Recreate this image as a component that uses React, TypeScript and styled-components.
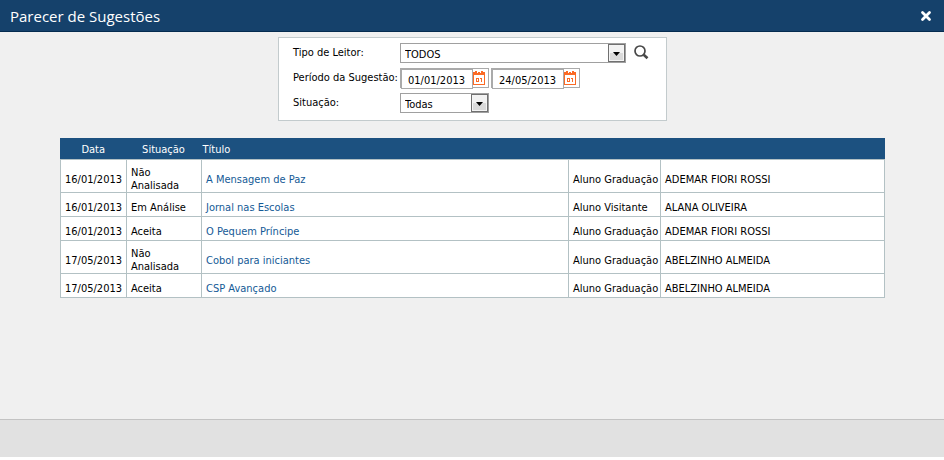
import React from "react";
import styled, { createGlobalStyle } from "styled-components";

const ui = `"DejaVu Sans Condensed", "DejaVu Sans", sans-serif`;

const GlobalStyle = createGlobalStyle`
  * { box-sizing: border-box; }
  body { margin: 0; background: #fff; color: #000; font: 11px/13px ${ui}; }
`;

const Dialog = styled.div`
  display: flex;
  flex-direction: column;
  min-height: calc(100vh - 3px);
  background: #f0f0f0;
`;

const TitleBar = styled.header`
  display: flex;
  align-items: center;
  justify-content: space-between;
  height: 32px;
  padding: 0 12px 0 10px;
  background: #15416b;
  border-bottom: 1px solid #052b4f;
`;

const Title = styled.h1`
  margin: 0;
  color: #fff;
  font: 400 15px/20px "Open Sans", "Noto Sans", sans-serif;
`;

const IconButton = styled.button`
  display: flex;
  padding: 0;
  border: 0;
  background: none;
  cursor: pointer;
`;

const Body = styled.main`
  flex: 1;
  padding: 5px 59px 24px 60px;
`;

const Filters = styled.form`
  display: grid;
  grid-template-columns: 107px auto;
  row-gap: 5px;
  width: fit-content;
  margin: 0 auto 17px;
  padding: 5px 17px 7px 14px;
  border: 1px solid #c3cbcd;
  background: #fff;
`;

const Label = styled.label`
  padding-top: 3px;
  white-space: nowrap;
`;

const Controls = styled.div`
  display: flex;
  gap: 2px;
`;

const SelectBox = styled.div<{ $width: number }>`
  position: relative;
  display: flex;
  width: ${(p) => p.$width}px;
  height: 20px;
`;

const Select = styled.select`
  appearance: none;
  width: 100%;
  padding: 2px 20px 0 4px;
  border: 1px solid #a0a0a0;
  border-radius: 0;
  background: #fff;
  color: #000;
  font: 11px/15px ${ui};
`;

const Arrow = styled.span`
  position: absolute;
  top: 1px;
  right: 1px;
  bottom: 1px;
  display: flex;
  align-items: center;
  justify-content: center;
  width: 17px;
  padding-top: 1px;
  border: 1px solid #707070;
  background: linear-gradient(#f2f2f2 50%, #dadada 50%);
  box-shadow: inset 0 0 0 1px #f4f4f4;
  pointer-events: none;
`;

const SearchButton = styled(IconButton)`
  margin: 2px 0 0 6px;
`;

const DateBox = styled.div`
  display: flex;
  width: 89px;
  height: 20px;
  border: 1px solid #aaa;
`;

const DateInput = styled.input`
  width: 72px;
  height: 20px;
  padding: 2px 0 0 6px;
  border: 1px solid #aaa;
  border-radius: 0;
  background: #fff;
  color: #000;
  font: 11px/15px ${ui};
`;

const Table = styled.table`
  width: 100%;
  table-layout: fixed;
  border-collapse: collapse;
  background: #fff;
`;

const Col = styled.col<{ $width?: number }>`
  width: ${(p) => (p.$width ? `${p.$width}px` : "auto")};
`;

const HeadRow = styled.tr`
  border: solid #1c5180;
  border-width: 0 1px;
  background: #1c5180;
`;

const HeadCell = styled.th<{ $start?: boolean }>`
  height: 21px;
  padding: 2px 2px 0 1px;
  color: #fff;
  font-weight: 400;
  text-align: ${(p) => (p.$start ? "left" : "center")};
`;

const Cell = styled.td<{ $center?: boolean }>`
  height: 24px;
  padding: 7px 0 0 ${(p) => (p.$center ? 0 : 4)}px;
  border: 1px solid #b3c1c4;
  text-align: ${(p) => (p.$center ? "center" : "left")};
  white-space: nowrap;
  vertical-align: middle;
`;

const StatusCell = styled(Cell)`
  padding: 6px 8px 0 4px;
  white-space: normal;
`;

const TitleLink = styled.a`
  color: #145a96;
  text-decoration: none;
`;

const Footer = styled.footer`
  height: 38px;
  border-top: 1px solid #c3c3c3;
  background: #e1e1e1;
`;

const CloseIcon = () => (
  <svg width="12" height="12" viewBox="0 0 12 12" aria-hidden="true">
    <path d="M2.5 2.5l7 7M9.5 2.5l-7 7" stroke="#fff" strokeWidth="2.8" strokeLinecap="round" />
  </svg>
);

const SearchIcon = () => (
  <svg width="15" height="15" viewBox="0 0 15 15" fill="none" stroke="#484848" aria-hidden="true">
    <circle cx="6" cy="6" r="5" strokeWidth="1.7" />
    <path d="M9.7 9.7l3.8 3.6" strokeWidth="2.6" />
  </svg>
);

const CalendarIcon = () => (
  <svg width="13" height="17" viewBox="0 0 13 17" fill="none" stroke="#fb6a25" shapeRendering="crispEdges" aria-hidden="true">
    <path d="M0.5 4.5h11v11h-11z" />
    <path d="M0 4h12v2h-12zM2 2h2v2h-2zM8 2h2v2h-2zM0 3h2v1h-2zM5 3h2v1h-2zM10 3h2v1h-2z" fill="#fb6a25" stroke="none" />
    <path d="M3.5 9.5h2v3h-2zM7 9.5h1.5V13" />
  </svg>
);

const Caret = () => (
  <svg width="7" height="4" viewBox="0 0 7 4" aria-hidden="true">
    <path d="M0 0h7L3.5 4z" fill="#000" />
  </svg>
);

const rows = [
  ["16/01/2013", "Não Analisada", "A Mensagem de Paz", "Aluno Graduação", "ADEMAR FIORI ROSSI"],
  ["16/01/2013", "Em Análise", "Jornal nas Escolas", "Aluno Visitante", "ALANA OLIVEIRA"],
  ["16/01/2013", "Aceita", "O Pequem Príncipe", "Aluno Graduação", "ADEMAR FIORI ROSSI"],
  ["17/05/2013", "Não Analisada", "Cobol para iniciantes", "Aluno Graduação", "ABELZINHO ALMEIDA"],
  ["17/05/2013", "Aceita", "CSP Avançado", "Aluno Graduação", "ABELZINHO ALMEIDA"],
];

export default function App() {
  return (
    <>
      <GlobalStyle />
      <Dialog>
        <TitleBar>
          <Title>Parecer de Sugestões</Title>
          <IconButton type="button" aria-label="Fechar"><CloseIcon /></IconButton>
        </TitleBar>
        <Body>
          <Filters>
            <Label htmlFor="leitor">Tipo de Leitor:</Label>
            <Controls>
              <SelectBox $width={226}>
                <Select id="leitor"><option>TODOS</option></Select>
                <Arrow><Caret /></Arrow>
              </SelectBox>
              <SearchButton type="button" aria-label="Pesquisar"><SearchIcon /></SearchButton>
            </Controls>
            <Label htmlFor="inicio">Período da Sugestão:</Label>
            <Controls>
              <DateBox>
                <DateInput id="inicio" defaultValue="01/01/2013" />
                <IconButton type="button" aria-label="Escolher data inicial"><CalendarIcon /></IconButton>
              </DateBox>
              <DateBox>
                <DateInput aria-label="Data final" defaultValue="24/05/2013" />
                <IconButton type="button" aria-label="Escolher data final"><CalendarIcon /></IconButton>
              </DateBox>
            </Controls>
            <Label htmlFor="situacao">Situação:</Label>
            <Controls>
              <SelectBox $width={89}>
                <Select id="situacao"><option>Todas</option></Select>
                <Arrow><Caret /></Arrow>
              </SelectBox>
            </Controls>
          </Filters>
          <Table>
            <colgroup>
              <Col $width={66} /><Col $width={75} /><Col /><Col $width={92} /><Col $width={224} />
            </colgroup>
            <thead>
              <HeadRow>
                <HeadCell>Data</HeadCell>
                <HeadCell>Situação</HeadCell>
                <HeadCell $start>Título</HeadCell>
                <HeadCell /><HeadCell />
              </HeadRow>
            </thead>
            <tbody>
              {rows.map(([date, status, title, kind, reader], i) => (
                <tr key={i}>
                  <Cell $center>{date}</Cell>
                  <StatusCell>{status}</StatusCell>
                  <Cell><TitleLink href="#">{title}</TitleLink></Cell>
                  <Cell>{kind}</Cell>
                  <Cell>{reader}</Cell>
                </tr>
              ))}
            </tbody>
          </Table>
        </Body>
        <Footer />
      </Dialog>
    </>
  );
}
